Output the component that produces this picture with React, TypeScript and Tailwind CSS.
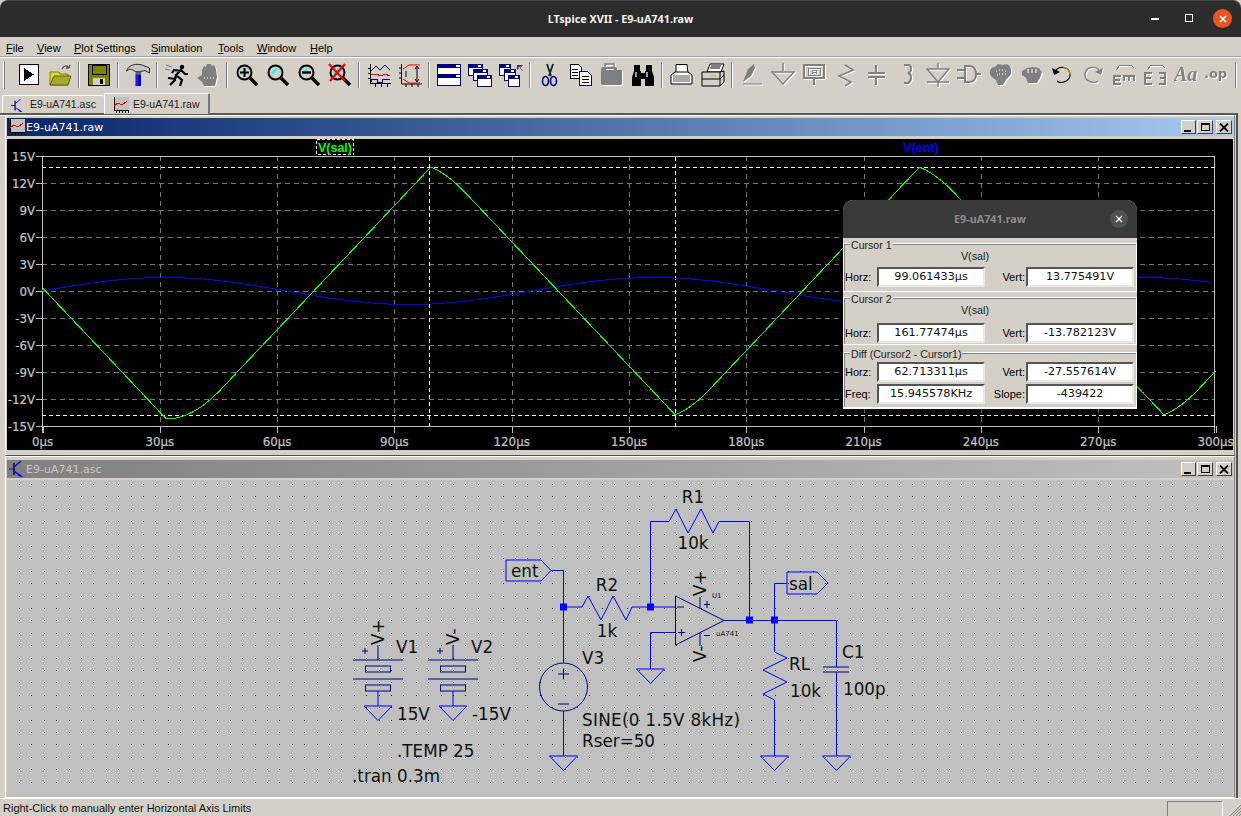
import React from "react";

const BLUE = "#0000ff";
const NAVY = "#000080";

function plotPaths() {
  let v = 0;
  const slew = 0.46;
  let g = "";
  let b = "";
  for (let t = 0; t <= 300; t += 0.25) {
    const s = Math.sin((2 * Math.PI * t) / 125);
    const target = -14.2 * Math.sin((2 * Math.PI * (t - 0.6)) / 125);
    const d = target - v;
    const step = slew * 0.25;
    v += Math.max(-step, Math.min(step, d));
    const x = (42.5 + 3.91 * t).toFixed(1);
    g += `${t === 0 ? "M" : "L"}${x} ${(291 - 9 * v).toFixed(1)}`;
    if (t <= 298.7) b += `${t === 0 ? "M" : "L"}${x} ${(291 - 9 * 1.5 * s).toFixed(1)}`;
  }
  return { g, b };
}
const curves = plotPaths();

function dotsPath() {
  let d = "";
  for (let r = 0; r < 26; r++) {
    const y = Math.round(484 + r * 12.4);
    for (let c = 0; c < 99; c++) {
      const x = Math.round(19 + c * 12.4);
      d += `M${x} ${y}h1v1h-1z`;
    }
  }
  return d;
}
const dots = dotsPath();

function Ico({ children, off, crisp }: { children: React.ReactNode; off?: boolean; crisp?: boolean }) {
  return (
    <div className="w-[31px] h-[26px] flex items-center justify-center shrink-0">
      <svg
        width="24"
        height="24"
        viewBox="0 0 24 24"
        shapeRendering={crisp ? "crispEdges" : undefined}
        className={off ? "drop-shadow-[1px_1px_0_#ffffff]" : ""}
      >
        {children}
      </svg>
    </div>
  );
}

function Sep() {
  return (
    <div className="w-[8px] h-[26px] flex justify-center shrink-0">
      <div className="w-[2px] h-full bg-[#808080] border-r border-white" />
    </div>
  );
}

function Mag({ children }: { children?: React.ReactNode }) {
  return (
    <>
      <circle cx="9.5" cy="9.5" r="7" fill="#d4d0c8" stroke="#000" strokeWidth="2" />
      <path d="M5 10 L10 5 L12 6 L6 12z" fill="#00ffff" />
      <path d="M15 15 L22 22" stroke="#000" strokeWidth="3.4" />
      {children}
    </>
  );
}

function Win({ x, y, w = 16, h = 11 }: { x: number; y: number; w?: number; h?: number }) {
  return (
    <g>
      <rect x={x + 0.5} y={y + 0.5} width={w} height={h} fill="#fff" stroke={NAVY} />
      <rect x={x} y={y} width={w} height={4} fill={NAVY} />
      <rect x={x + w - 4} y={y + 1} width={3} height={2} fill="#fff" />
    </g>
  );
}

const G = "#808080";

function Toolbar() {
  return (
    <div className="h-[35px] shrink-0 flex items-start pl-[13px] pt-[5px]">
      <div className="absolute left-[3px] top-[61px] w-[2px] h-[28px] bg-white border-r border-[#808080]" />
      <Ico crisp>
        <rect x="2.5" y="1.5" width="19" height="20" fill="#fff" stroke="#000" strokeWidth="1" />
        <path d="M7 5 L7 18 L17 11.5z" fill="#000" />
      </Ico>
      <Ico>
        <path d="M2 9h9l1 2h8v11H2z" fill="#d8d83c" stroke="#808000" />
        <path d="M2 22 L6 13 H23 L20 22z" fill="#a8a830" stroke="#606000" />
        <path d="M14 6 C16 2 19 2 21 5 M21 5 L22 2 M21 5 L18 5" fill="none" stroke="#555" strokeWidth="1.3" />
      </Ico>
      <Sep />
      <Ico crisp>
        <rect x="1.5" y="1.5" width="21" height="21" fill="#808000" stroke="#000" />
        <rect x="5" y="2" width="14" height="9" fill="#808000" stroke="#000" />
        <rect x="6" y="15" width="12" height="7" fill="#d4d0c8" />
        <rect x="13" y="16" width="3" height="5" fill="#000" />
      </Ico>
      <Sep />
      <Ico>
        <path d="M0.5 8 C3 1 11 0.5 16 2 L23.5 5 L23.5 10 L19 7.5 L14 8.5 H9 C6 5.5 3 6 0.5 8z" fill="#c8c8c8" stroke="#000" strokeWidth="0.8" />
        <rect x="9.5" y="8.5" width="5.5" height="3" fill="#606060" />
        <rect x="9.5" y="11.5" width="5.5" height="11.5" fill="#0000c0" />
        <rect x="10.5" y="11.5" width="1.5" height="11" fill="#2a2aff" />
      </Ico>
      <Sep />
      <Ico>
        <circle cx="17" cy="4" r="2.2" fill="#000" />
        <path d="M5 22 L10 17 L11 12 L16 7 L20 11 L23 11 M16 8 L9 7 L7 10 M12 13 L17 17 L15 23 M11 16 L3 15" fill="none" stroke="#000" strokeWidth="2.2" />
        <path d="M1 2 L7 4 M0 6 L5 7" stroke="#777" strokeWidth="1" />
      </Ico>
      <Ico off>
        <path d="M1 15 L6 12 L6 7 L8 3 L10 4 L11 1 L15 1 L16 3 L18 2 L20 6 L21 14 L19 23 L8 23 L6 19z" fill={G} />
        <path d="M8 15h1M11 15h1M14 15h1M17 15h1" stroke="#fff" />
      </Ico>
      <Sep />
      <Ico>
        <Mag>
          <path d="M9.5 5v9M5 9.5h9" stroke="#000" strokeWidth="2" />
        </Mag>
      </Ico>
      <Ico>
        <Mag />
      </Ico>
      <Ico>
        <Mag>
          <path d="M5 9.5h9" stroke="#000" strokeWidth="2.4" />
        </Mag>
      </Ico>
      <Ico>
        <Mag>
          <path d="M1 1 L17 18 M17 1 L2 18" stroke="#f00000" strokeWidth="2.2" />
        </Mag>
      </Ico>
      <Sep />
      <Ico crisp>
        <path d="M3.5 1v19.5H24" fill="none" stroke="#000" />
        <path d="M1 5h3M1 10h3M1 15h3M8 21v3M14 21v3M20 21v3" stroke="#000" />
        <path d="M4 8 L9 3 L13 7 L18 2 L23 7" fill="none" stroke={NAVY} />
        <path d="M4 12 L9 11 L14 13 L18 11 L23 13" fill="none" stroke="#f00000" />
        <path d="M4 19v-3h6v3h5v-3h8" fill="none" stroke={NAVY} />
      </Ico>
      <Ico>
        <path d="M3.5 1v20H24" fill="none" stroke="#000" />
        <path d="M1 5h3M1 10h3M1 15h3M8 21v3M14 21v3M20 21v3" stroke="#000" />
        <path d="M5 6 L11 2 H22 M5 16 L11 20 H22" fill="none" stroke="#f00000" />
        <path d="M19 3v16M8 8v6" stroke="#000" />
        <path d="M17 6l2-3 2 3M17 16l2 3 2-3" fill="none" stroke="#000" />
      </Ico>
      <Sep />
      <Ico crisp>
        <rect x="0.5" y="1.5" width="23" height="10" fill="#fff" stroke={NAVY} />
        <rect x="0" y="1" width="24" height="4" fill={NAVY} />
        <rect x="0.5" y="11.5" width="23" height="11" fill="#fff" stroke={NAVY} />
        <rect x="0" y="11" width="24" height="4" fill={NAVY} />
        <rect x="19" y="2" width="4" height="2" fill="#fff" />
        <rect x="19" y="12" width="4" height="2" fill="#fff" />
      </Ico>
      <Ico crisp>
        <Win x={0} y={1} w={14} h={11} />
        <Win x={5} y={6} w={14} h={11} />
        <Win x={9} y={12} w={14} h={11} />
      </Ico>
      <Ico crisp>
        <Win x={0} y={1} w={11} h={11} />
        <Win x={5} y={6} w={11} h={11} />
        <Win x={9} y={12} w={11} h={11} />
        <path d="M18 2h5v1h-4v3h-1zM20 3l4 5" fill="#333" stroke="#333" strokeWidth="0.6" />
      </Ico>
      <Sep />
      <Ico>
        <path d="M9 1 L13 13 M15 1 L11 13" stroke="#222" strokeWidth="1.8" />
        <ellipse cx="7.5" cy="18" rx="3" ry="4.5" fill="none" stroke={NAVY} strokeWidth="1.6" />
        <ellipse cx="15.5" cy="18" rx="3" ry="4.5" fill="none" stroke={NAVY} strokeWidth="1.6" />
      </Ico>
      <Ico crisp>
        <path d="M1.5 1.5h8l3 3v11h-11z" fill="#fff" stroke="#000" />
        <path d="M3 6h6M3 9h6M3 12h6" stroke="#000" />
        <path d="M10.5 8.5h8l4 4v9.5h-12z" fill="#fff" stroke={NAVY} />
        <path d="M13 13h7M13 16h7M13 19h7" stroke="#000" />
      </Ico>
      <Ico off>
        <rect x="1" y="4" width="16" height="18" rx="2" fill={G} />
        <rect x="5" y="1" width="9" height="4" fill="none" stroke={G} strokeWidth="1.6" />
        <rect x="11" y="7" width="11" height="15" rx="1" fill={G} />
        <rect x="6" y="6" width="8" height="1" fill="#e8e8e8" />
      </Ico>
      <Ico>
        <path d="M3 8h7v15H1V14zM14 8h7l2 6v9h-9z" fill="#000" />
        <rect x="3" y="2" width="6" height="6" fill="#000" />
        <rect x="15" y="2" width="6" height="6" fill="#000" />
        <rect x="4" y="9" width="2" height="5" fill="#999" />
        <rect x="15" y="9" width="2" height="5" fill="#999" />
        <rect x="10" y="10" width="4" height="6" fill="#000" />
      </Ico>
      <Sep />
      <Ico>
        <path d="M6 10V1.5h11L18 10z" fill="#fff" stroke="#000" />
        <path d="M1 12 L5 9 H18 L22 12 V21 H1z" fill="#fff" stroke="#000" />
        <rect x="3" y="12" width="17" height="7" fill="#aaa" />
      </Ico>
      <Ico>
        <path d="M6 9 L9 1 H23 L20 9z" fill="#fff" stroke="#000" />
        <path d="M1 9h18l4-1v11l-4 4H1z" fill="#d4d0c8" stroke="#000" />
        <path d="M1 16h18M19 9v14M19 16l4-4" stroke="#000" />
        <path d="M10 3h10M9 5h10" stroke="#000" />
        <rect x="10" y="12" width="5" height="1" fill="#d8c800" />
      </Ico>
      <Sep />
      <Ico off>
        <path d="M3 19 L8 6 L14 1 L15 5 L11 13z" fill={G} />
        <path d="M3 21h19" stroke={G} strokeWidth="1" />
      </Ico>
      <Ico off>
        <path d="M12 0v8M1 9h22L12 21z" fill="none" stroke={G} strokeWidth="1.5" />
      </Ico>
      <Ico off crisp>
        <path d="M2 2h20v13H2z M12 15v7" fill="none" stroke={G} strokeWidth="2" />
        <rect x="6" y="5" width="12" height="7" fill="none" stroke={G} />
        <path d="M10 11V7h4v4M10 9h4" fill="none" stroke={G} />
      </Ico>
      <Ico off>
        <path d="M12 2 L20 7 L6 13 L18 19 L12 23" fill="none" stroke={G} strokeWidth="1.6" />
      </Ico>
      <Ico off crisp>
        <path d="M12 2v8M4 10h17M4 14h17M12 14v8" fill="none" stroke={G} strokeWidth="2" />
      </Ico>
      <Ico off>
        <path d="M9 2h4c4 0 4 7 0 8 c4 1 4 8 0 10 H9" fill="none" stroke={G} strokeWidth="2" />
      </Ico>
      <Ico off>
        <path d="M12 0v6M1 6h22L12 19zM1 19h22M12 19v5" fill="none" stroke={G} strokeWidth="1.5" />
      </Ico>
      <Ico off>
        <path d="M8 3h5c8 0 8 16 0 16H8zM0 7h8M0 15h8M18 11h6" fill="none" stroke={G} strokeWidth="2" />
      </Ico>
      <Ico off>
        <path d="M2 8 C3 3 7 5 8 3 C10 0 13 2 15 2 C18 0 23 2 23 7 C24 13 20 14 18 17 L15 22 H10 L8 17 C5 15 1 13 2 8z" fill={G} />
        <path d="M8 8h1M11 7h1M14 7h1M17 8h1M11 11h1M14 11h1M9 12h1M17 11h1" stroke="#fff" />
      </Ico>
      <Ico off>
        <path d="M3 8 L8 5 L14 4 L20 5 L23 9 L21 15 L18 20 H9 L7 15 L3 12z" fill={G} />
        <path d="M9 6v4M13 6v4M17 6v4" stroke="#fff" />
      </Ico>
      <Ico>
        <path d="M5 9 C8 2 20 3 20 12 C20 19 10 21 7 18" fill="none" stroke="#000" strokeWidth="1.2" />
        <path d="M13 4 C17 4 20 8 20 12" fill="none" stroke="#a89800" strokeWidth="1.2" />
        <path d="M2 5 L4 12 L10 9z" fill="#000" />
      </Ico>
      <Ico off>
        <path d="M19 9 C16 2 4 3 4 12 C4 19 14 21 17 18" fill="none" stroke={G} strokeWidth="1.4" />
        <path d="M22 5 L20 12 L14 9z" fill={G} />
      </Ico>
      <Ico off crisp>
        <path d="M4 7 L8 2 H19 L22 5" fill="none" stroke={G} />
        <path d="M1 12h8v2H3v2h5v2H3v2h6v2H1zM11 12h12v6h-2v-4h-3v4h-2v-4h-3v4h-2z" fill={G} />
      </Ico>
      <Ico off crisp>
        <path d="M4 7 L8 2 H19 L22 5" fill="none" stroke={G} />
        <path d="M1 9h8v2H3v3h5v2H3v4h6v2H1zM16 9h7v13h-7v-2h5v-4h-4v-2h4v-3h-5z" fill={G} />
      </Ico>
      <Ico off>
        <text x="0" y="18" fontFamily="'Liberation Serif',serif" fontStyle="italic" fontWeight="700" fontSize="20" fill={G}>Aa</text>
      </Ico>
      <Ico off>
        <text x="-1" y="15" fontFamily="'DejaVu Sans',sans-serif" fontWeight="700" fontSize="13" fill={G}>.op</text>
      </Ico>
      <Sep />
    </div>
  );
}

function WinBtns() {
  const b = "h-[14px] bg-[#d4d0c8] border border-t-white border-l-white border-r-[#404040] border-b-[#404040] flex items-center justify-center";
  return (
    <div className="flex items-center gap-[1px] pr-[1px]">
      <div className={`${b} w-[15px]`}>
        <div className="w-[7px] h-[2px] bg-black mt-[7px] mr-[2px]" />
      </div>
      <div className={`${b} w-[16px]`}>
        <div className="w-[9px] h-[8px] border border-black border-t-2" />
      </div>
      <div className={`${b} w-[16px] ml-[2px]`}>
        <svg width="10" height="9" viewBox="0 0 10 9">
          <path d="M1 0.5 L9 8.5 M9 0.5 L1 8.5" stroke="#000" strokeWidth="1.8" />
        </svg>
      </div>
    </div>
  );
}

function TranIcon({ size = 16 }: { size?: number }) {
  return (
    <svg width={size} height={size} viewBox="0 0 16 16" className="shrink-0">
      <path d="M5 2v12" stroke="#000" strokeWidth="1.4" />
      <path d="M0 8h5M5 6 L12 0M5 10 L13 16" stroke={BLUE} strokeWidth="1.2" />
      <path d="M10 12.5 L14 16 L9 15z" fill={BLUE} />
    </svg>
  );
}

function PlotIcon({ w = 16, h = 16 }: { w?: number; h?: number }) {
  return (
    <svg width={w} height={h} viewBox="0 0 16 16" className="shrink-0" shapeRendering="crispEdges">
      <rect x="1" y="0" width="15" height="13" fill="#c0c0c0" />
      <path d="M1.5 0v13H16" fill="none" stroke="#000" />
      <path d="M1 9 L5 6 L9 8 L14 4" fill="none" stroke="#f00000" />
      <path d="M3 14v2M6 14v2M9 14v2M12 14v2M15 14v2" stroke="#000" />
    </svg>
  );
}

function Plot() {
  const ys = [183, 210, 237, 264, 291, 318, 345, 372, 399];
  const labels = ["15V", "12V", "9V", "6V", "3V", "0V", "-3V", "-6V", "-9V", "-12V", "-15V"];
  const xl = ["0µs", "30µs", "60µs", "90µs", "120µs", "150µs", "180µs", "210µs", "240µs", "270µs", "300µs"];
  const fr = "#c0c0c0";
  return (
    <svg viewBox="7 139 1226 311" width="1226" height="311" className="block" fontFamily="'DejaVu Sans',sans-serif">
      <g shapeRendering="crispEdges">
        {ys.map((y) => (
          <path key={y} d={`M42 ${y}.5H1215`} stroke="#777777" strokeDasharray="5 4" />
        ))}
        {xl.slice(1, 10).map((_, i) => {
          const x = Math.round(42.5 + 117.3 * (i + 1));
          return <path key={i} d={`M${x}.5 156V426`} stroke="#777777" strokeDasharray="5 4" />;
        })}
        {labels.map((_, i) => (
          <path key={i} d={`M36 ${156 + i * 27}.5H42`} stroke={fr} />
        ))}
        {xl.map((_, i) => {
          const x = Math.round(42.5 + 117.3 * i);
          return <path key={i} d={`M${x}.5 426V433`} stroke={fr} />;
        })}
        <path d="M36 156.5H1214.5V433M42.5 156V433M36 426.5H1215" fill="none" stroke={fr} />
        <path d="M42 167.5H1215M42 415.5H1215M429.5 157V426M675.5 157V426" stroke="#ffffff" strokeDasharray="4 3" />
        <path d={curves.b} fill="none" stroke={BLUE} />
        <path d={curves.g} fill="none" stroke="#00ff00" />
        <rect x="316.5" y="139.5" width="37" height="15" fill="none" stroke="#ffffff" strokeDasharray="3 2" />
      </g>
      <g fontSize="11.8" fill="#c4c4c4" stroke="#c4c4c4" strokeWidth="0.2">
        {labels.map((l, i) => (
          <text key={l} x="35" y={160.5 + i * 27} textAnchor="end">{l}</text>
        ))}
        {xl.map((l, i) => (
          <text key={l} x={42.5 + 117.3 * i} y="446" textAnchor="middle">{l}</text>
        ))}
      </g>
      <text x="335" y="151.5" textAnchor="middle" fontSize="12.5" fontWeight="700" fontFamily="'Liberation Sans',sans-serif" fill="#00ff00">V(sal)</text>
      <text x="921" y="151.5" textAnchor="middle" fontSize="12.5" fontWeight="700" fontFamily="'Liberation Sans',sans-serif" fill={BLUE}>V(ent)</text>
    </svg>
  );
}

function Gnd({ x, y }: { x: number; y: number }) {
  return <path d={`M${x - 14} ${y}H${x + 14}L${x} ${y + 14.5}Z`} fill="none" stroke={BLUE} />;
}
function Dot({ x, y }: { x: number; y: number }) {
  return <rect x={x - 3.5} y={y - 3.5} width="7" height="7" fill={BLUE} />;
}
function Battery({ x, y, sign }: { x: number; y: number; sign: string }) {
  const w = 25;
  return (
    <g>
      <path d={`M${x} ${y + 15}v15`} stroke={NAVY} />
      <path d={`M${x - w} ${y + 30}H${x + w}M${x - w} ${y + 49}H${x + w}`} stroke={NAVY} />
      <rect x={x - 12.5} y={y + 36} width="25" height="6" fill="none" stroke={NAVY} />
      <rect x={x - 12.5} y={y + 55} width="25" height="6" fill="none" stroke={NAVY} />
      <path d={`M${x} ${y + 61}v15`} stroke={BLUE} />
      <Gnd x={x} y={y + 76} />
      <path d={`M${x - 16} ${y + 21}h6M${x - 13} ${y + 18}v6`} stroke={NAVY} />
      <text transform={`translate(${x + 6} ${y + 15}) rotate(-90)`}>V{sign}</text>
    </g>
  );
}

function Schematic() {
  const t = "#111111";
  return (
    <svg viewBox="7 480 1226 314" width="1226" height="314" className="block" fontFamily="'DejaVu Sans',sans-serif" fontSize="16.8" fill={t}>
      <path d={dots} fill="#000" shapeRendering="crispEdges" />
      <g fill="none" stroke={BLUE}>
        <path d="M506 560H541L551 570.5L541 581H506Z" />
        <path d="M551 570.5H563.5V663M563.5 711V756" />
        <path d="M563 607H582L588 596L601 620L613 596L626 620L632 607H675" />
        <path d="M650.5 607V521.5H669L676 509L688 533L701 509L713 533L719 521.5H749.5V620" />
        <path d="M724 620.5H836.5V667" />
        <path d="M836.5 672V756" />
        <path d="M774.5 620V583.5H787" />
        <path d="M787 572H817L828 583L817 594H787Z" />
        <path d="M774.5 620V652L787 658L763 670L787 682L763 694L774.5 700V756" />
        <path d="M675 632.5H650.5V669" />
        <path d="M823 667H849M823 672H849" stroke={NAVY} />
      </g>
      <Gnd x={563.5} y={756} />
      <Gnd x={650.5} y={669} />
      <Gnd x={774.5} y={756} />
      <Gnd x={836.5} y={756} />
      <Dot x={563.5} y={607} />
      <Dot x={650.5} y={607} />
      <Dot x={749.5} y={620} />
      <Dot x={774.5} y={620} />
      <g fill="none" stroke={NAVY}>
        <path d="M675.5 596V645L724 620.5Z" />
        <path d="M700 597V608M700 633V646" />
        <path d="M677 607h7M678 632.5h7M681.5 629v7M704 604.5h6M707 601v7M704 635.5h6" />
        <circle cx="563.5" cy="687" r="24" />
        <path d="M558 674h11M563.5 668.5v11M558 704h11" />
      </g>
      <Battery x={378} y={630} sign="+" />
      <Battery x={453} y={630} sign="-" />

      <text x="693" y="503" textAnchor="middle">R1</text>
      <text x="693" y="549" textAnchor="middle">10k</text>
      <text x="607" y="591" textAnchor="middle">R2</text>
      <text x="607" y="637" textAnchor="middle">1k</text>
      <text x="511" y="577">ent</text>
      <text x="789" y="590">sal</text>
      <text x="582" y="664">V3</text>
      <text x="582" y="726" textLength="158">SINE(0 1.5V 8kHz)</text>
      <text x="582" y="747">Rser=50</text>
      <text x="789" y="670">RL</text>
      <text x="790" y="697">10k</text>
      <text x="842" y="658">C1</text>
      <text x="843" y="695">100p</text>
      <text x="396" y="653">V1</text>
      <text x="471" y="653">V2</text>
      <text x="397" y="720">15V</text>
      <text x="472" y="720">-15V</text>
      <text x="397" y="757">.TEMP 25</text>
      <text x="352" y="782">.tran 0.3m</text>
      <text x="712" y="597.5" fontSize="7">U1</text>
      <text x="716" y="636" fontSize="7">uA741</text>
      <text transform="translate(706 596) rotate(-90)">V+</text>
      <text transform="translate(706 662) rotate(-90)">V-</text>
    </svg>
  );
}

function Field({ v }: { v: string }) {
  return (
    <div className="w-[108px] h-[20px] bg-white border-2 border-t-[#555555] border-l-[#555555] border-r-[#e8e8e8] border-b-[#e8e8e8] flex items-center justify-center [font-family:'DejaVu_Sans',sans-serif] text-[11.2px] text-[#111]">
      {v}
    </div>
  );
}

function Row({ a, av, b, bv, h = "h-[20px]" }: { a: string; av: string; b: string; bv: string; h?: string }) {
  return (
    <div className={`flex items-center ${h}`}>
      <div className="w-[33px] pl-[1px] text-[11px]">{a}</div>
      <Field v={av} />
      <div className="w-[41px] text-right pr-[1px] text-[11px]">{b}</div>
      <Field v={bv} />
    </div>
  );
}

function Group({ title, h, children }: { title: string; h: string; children: React.ReactNode }) {
  return (
    <div className={`relative ${h} border border-white shadow-[inset_1px_1px_0_#808080] mx-0`}>
      <div className="absolute left-[6px] -top-[5px] bg-[#d4d0c8] px-[1px] text-[10.6px] leading-[13px] text-[#222] whitespace-nowrap">{title}</div>
      {children}
    </div>
  );
}

function Dialog() {
  return (
    <div className="absolute left-[843px] top-[200px] w-[294px] h-[209px] rounded-t-[10px] overflow-hidden shadow-[0_2px_10px_rgba(0,0,0,0.5)] flex flex-col bg-[#d4d0c8] [font-family:'Liberation_Sans',sans-serif]">
      <div className="h-[38px] shrink-0 bg-[#393939] flex items-center justify-center relative">
        <span className="text-[10.8px] font-bold text-[#8c8c8c] [font-family:'Noto_Sans',sans-serif]">E9-uA741.raw</span>
        <div className="absolute right-[9px] top-[10px] w-[18px] h-[18px] rounded-full bg-[#515151] flex items-center justify-center">
          <svg width="8" height="8" viewBox="0 0 8 8">
            <path d="M1 1L7 7M7 1L1 7" stroke="#fff" strokeWidth="1.4" />
          </svg>
        </div>
      </div>
      <div className="flex-1 flex flex-col pt-[5px] border-b border-white">
        <Group title="Cursor 1" h="h-[49px]">
          <div className="text-center text-[10.8px] text-[#222] leading-[12px] pt-[6px] pr-[30px]">V(sal)</div>
          <div className="mt-[5px]">
            <Row a="Horz:" av="99.061433µs" b="Vert:" bv="13.775491V" />
          </div>
        </Group>
        <div className="h-[5px]" />
        <Group title="Cursor 2" h="h-[48px]">
          <div className="text-center text-[10.8px] text-[#222] leading-[12px] pt-[6px] pr-[30px]">V(sal)</div>
          <div className="mt-[7px]">
            <Row a="Horz:" av="161.77474µs" b="Vert:" bv="-13.782123V" />
          </div>
        </Group>
        <div className="h-[7px]" />
        <Group title="Diff (Cursor2 - Cursor1)" h="h-[56px]">
          <div className="pt-[9px] flex flex-col gap-[2px]">
            <Row a="Horz:" av="62.713311µs" b="Vert:" bv="-27.557614V" />
            <Row a="Freq:" av="15.945578KHz" b="Slope:" bv="-439422" />
          </div>
        </Group>
      </div>
    </div>
  );
}

function Menu() {
  const items: [string, string, string][] = [
    ["F", "ile", "w-[31px]"],
    ["V", "iew", "w-[37px]"],
    ["P", "lot Settings", "w-[77px]"],
    ["S", "imulation", "w-[67px]"],
    ["T", "ools", "w-[39px]"],
    ["W", "indow", "w-[53px]"],
    ["H", "elp", "w-[40px]"],
  ];
  return (
    <div className="h-[20px] shrink-0 flex items-center pl-[6px] pt-[4px] border-b border-[#a0a0a0] shadow-[0_1px_0_#ffffff] text-[11px] text-black">
      {items.map(([a, b, w]) => (
        <div key={a} className={w}>
          <span className="underline">{a}</span>
          {b}
        </div>
      ))}
    </div>
  );
}

export default function App() {
  return (
    <div className="relative w-[1241px] h-[816px] overflow-hidden flex flex-col bg-[#d4d0c8] [font-family:'Liberation_Sans',sans-serif]">
      <div className="h-[37px] shrink-0 bg-[#2c2c2c] rounded-t-[8px] flex items-center justify-center relative border-t border-[#444444]">
        <span className="text-[10.8px] font-bold text-[#f2f2f2] [font-family:'Noto_Sans',sans-serif]">LTspice XVII - E9-uA741.raw</span>
        <div className="absolute right-[82px] top-[17px] w-[8px] h-[2px] bg-white" />
        <div className="absolute right-[48px] top-[13px] w-[8px] h-[8px] border border-white" />
        <div className="absolute right-[9px] top-[8px] w-[19px] h-[19px] rounded-full bg-[#e95420] flex items-center justify-center">
          <svg width="8" height="8" viewBox="0 0 8 8">
            <path d="M1 1L7 7M7 1L1 7" stroke="#fff" strokeWidth="1.5" />
          </svg>
        </div>
      </div>
      <Menu />
      <Toolbar />
      <div className="h-[21px] shrink-0 flex items-end pl-[2px] relative text-[10.5px] text-[#222]">
        <div className="w-[102px] h-[18px] flex items-center gap-[12px] pl-[8px] pt-[1px] border-t border-l border-white rounded-t-[2px]">
          <TranIcon size={13} />
          <span className="-ml-[6px]">E9-uA741.asc</span>
        </div>
        <div className="w-[106px] h-[21px] flex items-center gap-[4px] pl-[8px] pt-[1px] border-t border-l border-white border-r-2 border-r-[#777777] rounded-t-[2px] relative z-10 bg-[#d4d0c8] mb-[-1px]">
          <PlotIcon />
          <span>E9-uA741.raw</span>
        </div>
      </div>
      <div className="flex-1 min-h-0 flex flex-col border-t-2 border-t-[#5a5a5a] border-r-2 border-r-[#505050] pl-[5px] pr-[1px] mr-[3px] shadow-[inset_0_1px_0_#ffffff]">
        <div className="h-[341px] shrink-0 border border-t-white border-l-white border-r-[#808080] border-b-[#505050] pt-[2px] pl-[1px] pr-[1px] flex flex-col">
          <div className="h-[18px] shrink-0 bg-linear-to-r from-[#0a246a] to-[#a6caf0] flex items-center text-white">
            <div className="pl-[1px] w-[19px]">
              <PlotIcon w={18} h={16} />
            </div>
            <span className="flex-1 text-[11px] pt-[2px] [font-family:'DejaVu_Sans',sans-serif]">E9-uA741.raw</span>
            <WinBtns />
          </div>
          <div className="mt-[3px] bg-black h-[311px] overflow-hidden">
            <Plot />
          </div>
        </div>
        <div className="flex-1 min-h-0 border border-t-white border-l-white border-r-[#808080] border-b-white pt-[3px] pl-[1px] pr-[1px] flex flex-col">
          <div className="h-[18px] shrink-0 bg-linear-to-r from-[#808080] to-[#c0c0c0] flex items-center">
            <div className="pl-[2px] w-[19px]">
              <TranIcon />
            </div>
            <span className="flex-1 text-[11px] pt-[2px] text-[#c8c8c8] [font-family:'DejaVu_Sans',sans-serif]">E9-uA741.asc</span>
            <WinBtns />
          </div>
          <div className="mt-[2px] bg-[#c0c0c0] flex-1 min-h-0 overflow-hidden">
            <Schematic />
          </div>
        </div>
      </div>
      <div className="h-[18px] shrink-0 flex items-center pl-[3px] pt-[2px] relative text-[11px] text-[#111] border-t border-white">
        Right-Click to manually enter Horizontal Axis Limits
        <div className="absolute left-[1167px] top-[2px] w-[56px] h-[16px] border-t border-l border-t-[#808080] border-l-[#808080] border-r border-r-white" />
        <svg className="absolute right-0 bottom-0" width="12" height="12" viewBox="0 0 12 12">
          <path d="M12 1L1 12M12 4L4 12M12 7L7 12M12 10L10 12" stroke="#808080" strokeWidth="1" />
        </svg>
      </div>
      <Dialog />
    </div>
  );
}
